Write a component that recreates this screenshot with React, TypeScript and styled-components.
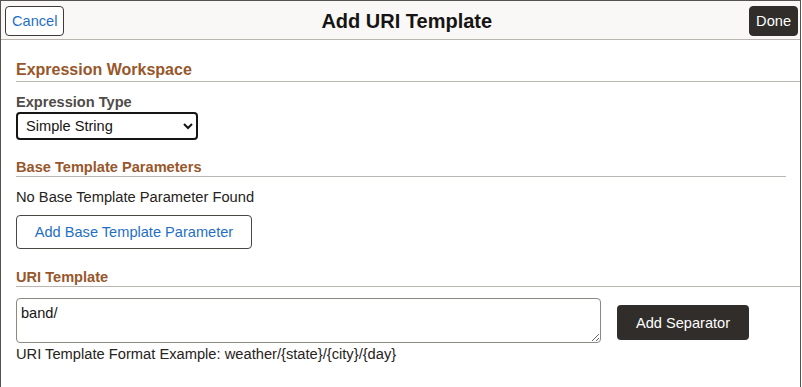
import * as React from 'react';
import styled, { createGlobalStyle } from 'styled-components';

//#######
// Style
//#######
const GlobalStyle = createGlobalStyle`
  html, body {
    margin: 0;
    padding: 0;
    background: #ffffff;
  }
  body {
    font-family: "Liberation Sans", Arial, sans-serif;
    color: #161513;
  }
`;

const StyledFrame = styled.div`
  box-sizing: border-box;
  width: 801px;
  height: 387px;
  border: 1px solid #55514e;
  border-bottom: none;
  display: flex;
  flex-direction: column;
`;

const StyledHeader = styled.header`
  box-sizing: border-box;
  height: 39px;
  padding: 2px 2px 0 4px;
  display: flex;
  align-items: center;
  background: #f9f8f7;
  border-bottom: 1px solid #b9b5b0;
`;

const StyledTitle = styled.h1`
  flex: 1;
  margin: 0;
  text-align: center;
  font-size: 20px;
  font-weight: bold;
  color: #161513;
`;

const StyledHeaderButton = styled.button<{ $primary?: boolean }>`
  box-sizing: border-box;
  height: 30px;
  padding: 0 6px;
  border-radius: 4px;
  font-family: inherit;
  font-size: 14.6px;
  cursor: pointer;
  border: 1px solid ${(props) => (props.$primary ? '#312d2a' : '#3d3a37')};
  background: ${(props) => (props.$primary ? '#312d2a' : '#ffffff')};
  color: ${(props) => (props.$primary ? '#ffffff' : '#1f6fc5')};
`;

const StyledContent = styled.main`
  padding-left: 15px;
  display: flex;
  flex-direction: column;
  align-items: flex-start;
`;

const StyledSectionTitle = styled.h2<{ $main?: boolean; $gap: number; $inset?: number }>`
  box-sizing: border-box;
  align-self: stretch;
  margin: ${(props) => props.$gap}px ${(props) => props.$inset || 0}px 0 0;
  padding-bottom: ${(props) => (props.$main ? 2 : 1)}px;
  font-size: ${(props) => (props.$main ? 16 : 14.6)}px;
  line-height: ${(props) => (props.$main ? 18 : 16)}px;
  font-weight: bold;
  color: #98572b;
  border-bottom: 1px solid #b9b5b0;
`;

const StyledLabel = styled.label`
  margin-top: 12px;
  font-size: 14.6px;
  line-height: 16px;
  font-weight: bold;
  color: #4f4b48;
`;

const StyledSelect = styled.select`
  box-sizing: border-box;
  margin-top: 2px;
  width: 182px;
  height: 28px;
  padding: 0 4px 0 4px;
  border: 2px solid #161513;
  border-radius: 4px;
  background: #ffffff;
  font-family: inherit;
  font-size: 14.6px;
  color: #161513;
`;

const StyledText = styled.div<{ $gap: number }>`
  margin-top: ${(props) => props.$gap}px;
  font-size: 14.7px;
  line-height: 16px;
  color: #262321;
`;

const StyledOutlineButton = styled.button`
  box-sizing: border-box;
  margin-top: 10px;
  width: 236px;
  height: 34px;
  border: 1px solid #4a4643;
  border-radius: 4px;
  background: #ffffff;
  font-family: inherit;
  font-size: 14.6px;
  color: #1f6fc5;
  cursor: pointer;
`;

const StyledRow = styled.div`
  margin-top: 11px;
  display: flex;
  align-items: flex-start;
  gap: 16px;
`;

const StyledTextArea = styled.textarea`
  box-sizing: border-box;
  display: block;
  width: 585px;
  height: 45px;
  padding: 6px 4px 0 4px;
  border: 1px solid #8c8884;
  border-radius: 4px;
  font-family: inherit;
  font-size: 14.6px;
  line-height: 16px;
  color: #161513;
`;

const StyledSolidButton = styled.button`
  box-sizing: border-box;
  margin-top: 7px;
  width: 132px;
  height: 35px;
  border: none;
  border-radius: 4px;
  background: #312d2a;
  font-family: inherit;
  font-size: 14.6px;
  color: #ffffff;
  cursor: pointer;
`;

//###############
// App component
//###############
const App = () => {
  const [expressionType, setExpressionType] = React.useState('simple');
  const [uri, setUri] = React.useState('band/');

  return (
    <>
      <GlobalStyle />
      <StyledFrame>
        <StyledHeader>
          <StyledHeaderButton type="button">Cancel</StyledHeaderButton>
          <StyledTitle>Add URI Template</StyledTitle>
          <StyledHeaderButton type="button" $primary>
            Done
          </StyledHeaderButton>
        </StyledHeader>

        <StyledContent>
          <StyledSectionTitle $main $gap={21}>
            Expression Workspace
          </StyledSectionTitle>

          <StyledLabel htmlFor="expressionType">Expression Type</StyledLabel>
          <StyledSelect
            id="expressionType"
            value={expressionType}
            onChange={(event) => setExpressionType(event.target.value)}
          >
            <option value="simple">Simple String</option>
            <option value="complex">Complex Expression</option>
          </StyledSelect>

          <StyledSectionTitle $gap={19} $inset={14}>
            Base Template Parameters
          </StyledSectionTitle>
          <StyledText $gap={12}>No Base Template Parameter Found</StyledText>
          <StyledOutlineButton type="button">
            Add Base Template Parameter
          </StyledOutlineButton>

          <StyledSectionTitle $gap={20}>URI Template</StyledSectionTitle>
          <StyledRow>
            <StyledTextArea
              value={uri}
              onChange={(event) => setUri(event.target.value)}
            />
            <StyledSolidButton type="button">Add Separator</StyledSolidButton>
          </StyledRow>
          <StyledText $gap={3}>
            URI Template Format Example: weather/{'{state}'}/{'{city}'}/{'{day}'}
          </StyledText>
        </StyledContent>
      </StyledFrame>
    </>
  );
};

export default App;
